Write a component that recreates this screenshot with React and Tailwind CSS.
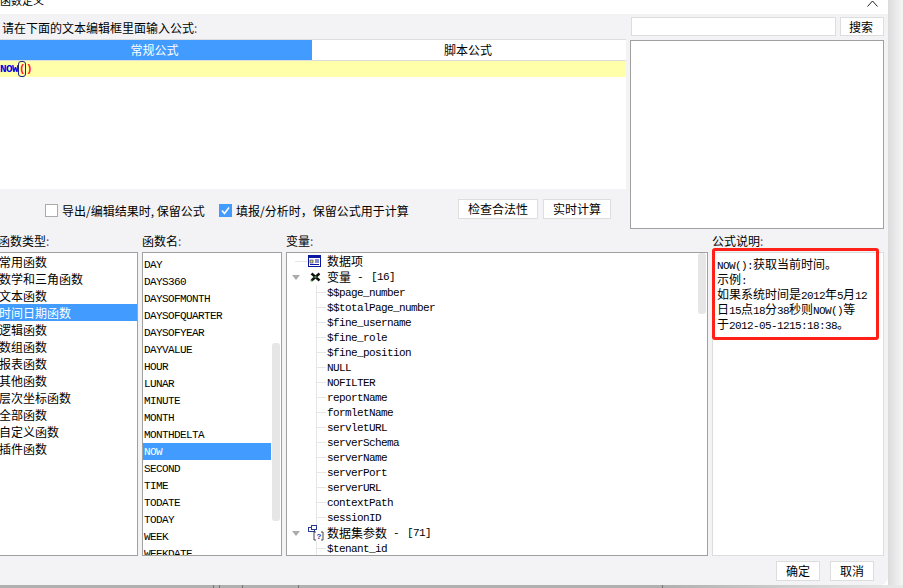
// App.jsx - 函数定义 dialog
const categories = ["常用函数", "数学和三角函数", "文本函数", "时间日期函数", "逻辑函数", "数组函数", "报表函数", "其他函数", "层次坐标函数", "全部函数", "自定义函数", "插件函数"];
const functions = ["DAY", "DAYS360", "DAYSOFMONTH", "DAYSOFQUARTER", "DAYSOFYEAR", "DAYVALUE", "HOUR", "LUNAR", "MINUTE", "MONTH", "MONTHDELTA", "NOW", "SECOND", "TIME", "TODATE", "TODAY", "WEEK", "WEEKDATE"];
const variables = ["$$page_number", "$$totalPage_number", "$fine_username", "$fine_role", "$fine_position", "NULL", "NOFILTER", "reportName", "formletName", "servletURL", "serverSchema", "serverName", "serverPort", "serverURL", "contextPath", "sessionID"];

const mono = "font-['Liberation_Mono','Noto_Sans_CJK_SC',monospace] text-[11px] tracking-[-0.6px]";

function Label({ text }) {
  return (
    <div className="h-[23px] flex items-center leading-none">
      {text}
      <span className="text-[#7a3f8f]">:</span>
    </div>
  );
}

function Button({ children, className }) {
  return (
    <button className={`h-[20px] bg-white border border-[#dddddd] flex items-center justify-center text-black ${className}`}>
      {children}
    </button>
  );
}

function DataIcon() {
  return (
    <svg width="13" height="12" viewBox="0 0 13 12" className="shrink-0">
      <rect x="0.5" y="0.5" width="12" height="11" fill="#fff" stroke="#0a18a0" />
      <rect x="1" y="1" width="11" height="2" fill="#0a18a0" />
      <rect x="2" y="5" width="3" height="3" fill="#e8d84a" stroke="#0a18a0" strokeWidth="0.6" />
      <path d="M7 5h4M7 7h4M2 9.5h9" stroke="#0a18a0" />
    </svg>
  );
}

function VarIcon() {
  return (
    <svg width="11" height="10" viewBox="0 0 11 10" className="shrink-0 ml-[2px]">
      <path d="M1.5 1.5L9.5 8.5M9.5 1.5L1.5 8.5" stroke="#111" strokeWidth="2.4" />
      <circle cx="5.5" cy="5" r="1.2" fill="#3f8f3f" />
      <circle cx="1.5" cy="8.5" r="1" fill="#3f8f3f" />
    </svg>
  );
}

function ParamIcon() {
  return (
    <svg width="17" height="16" viewBox="0 0 17 16" className="shrink-0 -ml-[1px]">
      <rect x="1.5" y="2.5" width="6" height="4" fill="#fff" stroke="#2a3a8c" />
      <rect x="4.5" y="0.5" width="5" height="4" fill="#fff" stroke="#2a3a8c" />
      <path d="M9 7H7V15H9M14 7H16V15H14" fill="none" stroke="#444" />
      <text x="9.5" y="14" fontSize="8" fontWeight="700" fill="#3030a0" fontFamily="Liberation Sans, sans-serif">?</text>
    </svg>
  );
}

function Arrow() {
  return <span className="w-0 h-0 border-x-[4px] border-x-transparent border-t-[5px] border-t-[#aaaaaa]" />;
}

function TreeHead({ expanded, icon, children }) {
  return (
    <div className="h-[16px] flex items-center">
      <span className="w-[21px] shrink-0 pl-[5px] flex items-center">
        {expanded ? <Arrow /> : <span className="ml-[3px] w-[12px] h-px bg-[#e6e6e6]" />}
      </span>
      <span className="w-[19px] shrink-0 flex items-center">{icon}</span>
      {children}
    </div>
  );
}

function Leaf({ name }) {
  return (
    <div className="h-[15px] flex items-center">
      <span className="w-[9px] h-px bg-[#e6e6e6] mr-px" />
      <span className={`${mono} leading-none pt-px`}>{name}</span>
    </div>
  );
}

export default function App() {
  return (
    <div className="w-[903px] h-[588px] overflow-hidden flex flex-col text-[12px] text-black font-['Noto_Sans_CJK_SC',sans-serif]">
      <div className="flex h-[585px]">
        {/* dialog */}
        <div className="w-[888px] bg-[#f3f3f6] rounded-br-lg flex flex-col overflow-hidden">
          <div className="h-[14px] bg-white overflow-hidden flex justify-between pr-[10px]">
            <span className="-mt-[7px] leading-[14px] text-[11px] text-black">函数定义</span>
            <svg width="11" height="7" viewBox="0 0 11 7">
              <path d="M0.5 6.5L5.5 1L10.5 6.5" fill="none" stroke="#222" />
            </svg>
          </div>

          {/* top area */}
          <div className="h-[215px] flex">
            <div className="w-[626px] shrink-0 flex flex-col">
              <div className="h-[25px] pl-[2px] flex items-center leading-none pt-[2px]">
                请在下面的文本编辑框里面输入公式<span className="text-[#7a3f8f]">:</span>
              </div>
              <div className="flex h-[22px] border-y border-[#dddddd] bg-white">
                <div className="w-[312px] pr-[3px] bg-[#429cff] text-white flex items-center justify-center">常规公式</div>
                <div className="flex-1 pr-[2px] flex items-center justify-center">脚本公式</div>
              </div>
              <div className="h-[128px] bg-white">
                <div className="h-[16px] bg-[#ffffaa] flex items-center font-['Liberation_Mono',monospace] text-[11px] font-bold tracking-[-0.6px] leading-none">
                  <span className="text-[#0000e6]">NOW</span>
                  <span className="h-[16px] w-[8px] border border-[#1a237e] rounded-[3px] flex items-center justify-center text-[#ff2020]">(</span>
                  <span className="text-[#ff2020]">)</span>
                </div>
              </div>
              <div className="flex items-start pt-[10px] pl-[45px]">
                <span className="w-[13px] h-[13px] mt-[5px] border border-[#aaaaaa] bg-white shrink-0" />
                <span className="ml-[4px] mt-[4px] leading-[15px] w-[157px] shrink-0">导出/编辑结果时, 保留公式</span>
                <span className="w-[13px] h-[13px] mt-[5px] bg-[#429cff] shrink-0 flex items-center justify-center">
                  <svg width="11" height="11" viewBox="0 0 11 11">
                    <path d="M2 5.5L4.5 8.5L9 2.5" fill="none" stroke="#fff" strokeWidth="1.6" />
                  </svg>
                </span>
                <span className="ml-[4px] mt-[4px] leading-[15px] w-[222px] shrink-0">填报/分析时，保留公式用于计算</span>
                <Button className="w-[80px]">检查合法性</Button>
                <Button className="w-[68px] ml-[5px]">实时计算</Button>
              </div>
            </div>
            <div className="w-[254px] ml-[4px] shrink-0 flex flex-col">
              <div className="flex h-[19px] mt-[3px] gap-[4px]">
                <div className="flex-1 ml-px bg-white border border-[#dddddd]" />
                <Button className="w-[44px] !h-[19px] pr-[2px]">搜索</Button>
              </div>
              <div className="h-[189px] mt-[4px] bg-white border border-[#a0a0a0]" />
            </div>
          </div>

          {/* bottom area */}
          <div className="flex -ml-[2px] gap-[4px]">
            <div className="w-[140px] shrink-0">
              <Label text="函数类型" />
              <div className="h-[304px] bg-white border border-[#a0a0a0]">
                {categories.map((c) => (
                  <div key={c} className={`h-[17px] flex items-center leading-none ${c === "时间日期函数" ? "bg-[#429cff] text-white" : ""}`}>
                    {c}
                  </div>
                ))}
              </div>
            </div>

            <div className="w-[140px] shrink-0">
              <Label text="函数名" />
              <div className="h-[304px] bg-white border border-[#a0a0a0] flex overflow-hidden">
                <div className="w-[128px] shrink-0 pt-[3px]">
                  {functions.map((f) => (
                    <div key={f} className={`h-[17px] pl-px pt-px flex items-center leading-none ${mono} ${f === "NOW" ? "bg-[#429cff] text-white" : ""}`}>
                      {f}
                    </div>
                  ))}
                </div>
                <div className="ml-px w-[8px] shrink-0">
                  <div className="mt-[90px] h-[178px] bg-[#e6e6e6] rounded-[3px]" />
                </div>
              </div>
            </div>

            <div className="w-[422px] shrink-0">
              <Label text="变量" />
              <div className="h-[304px] bg-white border border-[#a0a0a0] flex overflow-hidden">
                <div className="w-[411px] shrink-0">
                  <TreeHead icon={<DataIcon />}>数据项</TreeHead>
                  <TreeHead expanded icon={<VarIcon />}>
                    变量<span className={`${mono} ml-[6px]`}>-</span><span className={`${mono} ml-[8px]`}>[16]</span>
                  </TreeHead>
                  <div className="ml-[29px] border-l border-[#e6e6e6]">
                    {variables.map((v) => (
                      <Leaf key={v} name={v} />
                    ))}
                  </div>
                  <TreeHead expanded icon={<ParamIcon />}>
                    数据集参数<span className={`${mono} ml-[6px]`}>-</span><span className={`${mono} ml-[8px]`}>[71]</span>
                  </TreeHead>
                  <div className="ml-[29px] border-l border-[#e6e6e6]">
                    <Leaf name="$tenant_id" />
                  </div>
                </div>
                <div className="w-[8px] shrink-0">
                  <div className="h-[61px] bg-[#e6e6e6] rounded-[3px]" />
                </div>
              </div>
            </div>

            <div className="w-[172px] shrink-0 relative">
              <Label text="公式说明" />
              <div className="h-[304px] bg-white border border-[#dddddd] pl-[4px] pt-[3px] whitespace-nowrap">
                <div className="h-[15px] leading-[15px]"><span className={mono}>NOW():</span>获取当前时间。</div>
                <div className="h-[15px] leading-[15px]">示例<span className={mono}>:</span></div>
                <div className="h-[15px] leading-[15px]">如果系统时间是<span className={mono}>2012</span>年<span className={mono}>5</span>月<span className={mono}>12</span></div>
                <div className="h-[15px] leading-[15px]">日<span className={mono}>15</span>点<span className={mono}>18</span>分<span className={mono}>38</span>秒则<span className={mono}>NOW()</span>等</div>
                <div className="h-[15px] leading-[15px]">于<span className={mono}>2012-05-1215:18:38</span>。</div>
              </div>
              {/* annotation drawn over the description */}
              <div className="absolute left-0 top-[19px] w-[167px] h-[92px] border-[3px] border-[#ff2018] rounded-[3px]" />
            </div>
          </div>

          {/* footer */}
          <div className="flex justify-end gap-[10px] pt-[5px] pr-[14px]">
            <Button className="w-[44px]">确定</Button>
            <Button className="w-[44px]">取消</Button>
          </div>
        </div>
        <div className="flex-1 bg-linear-to-r from-[#dcdcdc] to-[#f6f6f6]" />
      </div>
      {/* window underneath */}
      <div className="flex-1 flex bg-[#b0b0b0]">
        <div className="w-[214px] border-r border-[#777777]" />
        <div className="w-[6px] border-r border-[#777777]" />
        <div className="w-[23px] border-r border-[#777777]" />
        <div className="w-[56px] border-r border-[#777777]" />
        <div className="w-[364px] border-r border-[#777777]" />
        <div className="flex-1 bg-linear-to-r from-[#b0b0b0] to-[#e8e8e8]" />
      </div>
    </div>
  );
}
